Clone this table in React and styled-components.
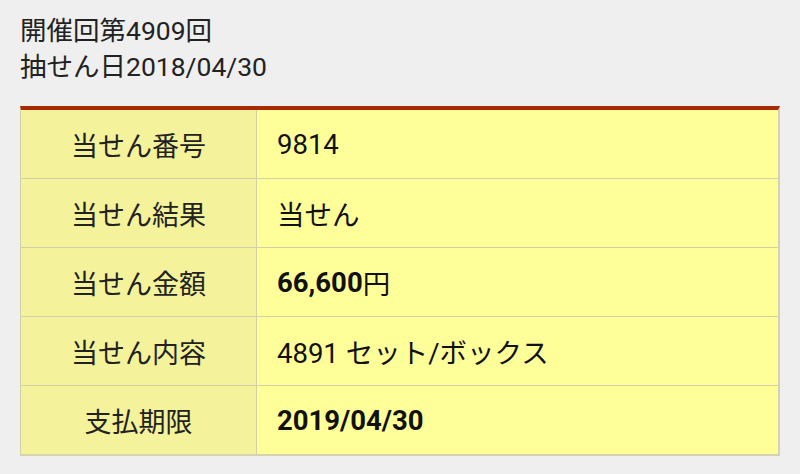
import React from "react";
import styled, { createGlobalStyle } from "styled-components";

const GlobalStyle = createGlobalStyle`
  html, body { margin: 0; padding: 0; background: #efefef; }
  body { font-family: Roboto, "Noto Sans CJK JP", sans-serif; color: #222; }
`;

const Page = styled.div`
  padding: 13px 20px 0 20px;
`;
const Info = styled.div`
  font-size: 26.5px; line-height: 36px; color: #222;
`;
const Table = styled.div`
  margin-top: 21px;
  display: grid; grid-template-columns: 236px 1fr;
  border-top: 4px solid #a82a05;
  border-left: 1px solid #d3cfa8; border-right: 2px solid #d6d2b0;
  border-bottom: 2px solid #d6d2b0;
`;
const LabelCell = styled.div`
  height: 68px; display: flex; align-items: center; justify-content: center;
  background: #f4f29a; font-size: 27px; color: #222;
  border-right: 1px solid #d3cfa8;
  border-bottom: ${(p) => (p.$last ? "0" : "1px solid #d3cfa8")};
`;
const ValueCell = styled.div`
  height: 68px; display: flex; align-items: center; padding-left: 20px;
  background: #ffff9a; font-size: 27.5px; color: #111;
  font-weight: ${(p) => (p.$bold ? 700 : 400)};
  border-bottom: ${(p) => (p.$last ? "0" : "1px solid #d3cfa8")};
`;
const Unit = styled.span`
  font-weight: 400;
`;

export default function App() {
  const rows = [
    { label: "当せん番号", value: "9814" },
    { label: "当せん結果", value: "当せん" },
    { label: "当せん金額", value: "66,600", unit: "円", bold: true },
    { label: "当せん内容", value: "4891 セット/ボックス" },
    { label: "支払期限", value: "2019/04/30", bold: true },
  ];
  return (
    <Page>
      <GlobalStyle />
      <Info>
        <div>開催回第4909回</div>
        <div>抽せん日2018/04/30</div>
      </Info>
      <Table>
        {rows.map((r, i) => (
          <React.Fragment key={r.label}>
            <LabelCell $last={i === rows.length - 1}>{r.label}</LabelCell>
            <ValueCell $bold={r.bold} $last={i === rows.length - 1}>
              {r.value}
              {r.unit && <Unit>{r.unit}</Unit>}
            </ValueCell>
          </React.Fragment>
        ))}
      </Table>
    </Page>
  );
}
